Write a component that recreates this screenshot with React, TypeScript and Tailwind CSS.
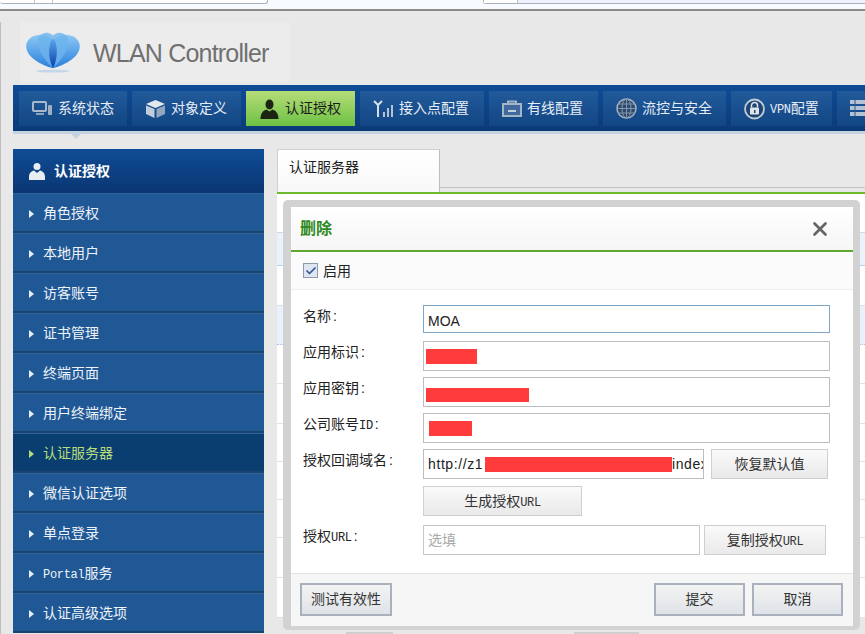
import type { ReactNode } from 'react';
import { Check, X } from 'lucide-react';

const FONT = '"Liberation Sans", "Noto Sans CJK SC", sans-serif';

// latin inside the Chinese labels is a narrow typewriter face in the original
function Latin({ children }: { children: ReactNode }) {
  return <span className="font-['Liberation_Mono'] text-[12px] tracking-[-0.3px]">{children}</span>;
}

function PcIcon() {
  return (
    <svg width="21" height="15" viewBox="0 0 21 15" fill="none">
      <rect x="1" y="1" width="13" height="9" rx="1" stroke="#a9b8ca" strokeWidth="2" />
      <path d="M4 13h8" stroke="#8fa3bb" strokeWidth="2" />
      <rect x="16" y="4" width="4" height="10" rx="1" fill="#9fb0c4" />
    </svg>
  );
}

function BoxIcon() {
  return (
    <svg width="21" height="20" viewBox="0 0 21 20">
      <path d="M10.5 1 20 5l-9.500 4L1 5z" fill="#e4e9ef" />
      <path d="M1 6.500l8.500 3.500v9L1 15z" fill="#c1ccd9" />
      <path d="M20 6.500 11.500 10v9l8.500-4z" fill="#93a7bf" />
    </svg>
  );
}

function UserDarkIcon() {
  return (
    <svg width="21" height="20" viewBox="-1.5 0 21 20">
      <ellipse cx="9" cy="5.500" rx="4" ry="5" fill="#1c2413" />
      <path d="M0 20c0-6 3-8.500 6-9.500l3 2 3-2c3 1 6 3.500 6 9.500z" fill="#1c2413" />
    </svg>
  );
}

function AntennaIcon() {
  return (
    <svg width="21" height="19" viewBox="0 0 21 19" fill="none">
      <path d="M1 2l4 4 4-4M5 6v12" stroke="#d7dee7" strokeWidth="2" />
      <rect x="10" y="13" width="2" height="5" fill="#b6c3d3" />
      <rect x="14" y="9" width="2" height="9" fill="#b6c3d3" />
      <rect x="18" y="6" width="2" height="12" fill="#b6c3d3" />
    </svg>
  );
}

function PortIcon() {
  return (
    <svg width="20" height="17" viewBox="0 0 20 17" fill="none">
      <rect x="1" y="4" width="18" height="12" fill="#3f6a9e" stroke="#a5b5c8" strokeWidth="2" />
      <path d="M6 4V1.500h8V4" stroke="#a5b5c8" strokeWidth="2" />
      <path d="M6 11h8" stroke="#c6d1de" strokeWidth="2" />
    </svg>
  );
}

function GlobeIcon() {
  return (
    <svg width="21" height="21" viewBox="0 0 21 21" fill="none">
      <circle cx="10.500" cy="10.500" r="9.500" fill="#2d4a6e" stroke="#a7b4c3" strokeWidth="1.500" />
      <ellipse cx="10.500" cy="10.500" rx="4.500" ry="9.500" stroke="#8496ab" />
      <path d="M10.500 1v19M1 10.500h19M2.500 6h16M2.500 15h16" stroke="#8496ab" />
    </svg>
  );
}

function LockIcon() {
  return (
    <svg width="21" height="22" viewBox="0 0 21 22" fill="none">
      <circle cx="10.500" cy="11" r="9.500" fill="#1e4573" stroke="#c4ccd6" strokeWidth="1.800" />
      <rect x="6" y="9.500" width="9" height="7" rx="1" fill="#dfe4ea" />
      <path d="M7.500 9.500V7.500a3 3 0 0 1 6 0v2" stroke="#dfe4ea" strokeWidth="1.500" />
      <rect x="10" y="12" width="1.500" height="3" fill="#1e4573" />
    </svg>
  );
}

function ServerIcon() {
  return (
    <svg width="20" height="17" viewBox="0 0 20 17">
      <rect y="0" width="20" height="4" fill="#b5c2d1" />
      <rect y="6" width="20" height="4" fill="#b5c2d1" />
      <rect y="12" width="20" height="4" fill="#b5c2d1" />
      <path d="M5 0v16" stroke="#2a5a92" strokeWidth="1" />
    </svg>
  );
}

function Logo() {
  return (
    <svg width="54" height="44" viewBox="0 0 56 46">
      <defs>
        <linearGradient id="petal" x1="0" y1="0" x2="0" y2="1">
          <stop offset="0" stopColor="#8cc8f4" />
          <stop offset="1" stopColor="#2a7fdc" />
        </linearGradient>
        <linearGradient id="mid" x1="0" y1="0" x2="0" y2="1">
          <stop offset="0" stopColor="#5aa6ea" />
          <stop offset="1" stopColor="#0a3fae" />
        </linearGradient>
      </defs>
      <path d="M28 40C14 36 0 28 0 17 0 9 8 5 15 5c6 0 11 3 13 7 2-4 7-7 13-7 7 0 15 4 15 12 0 11-14 19-28 23z" fill="url(#petal)" />
      <path d="M28 40C20 32 12 22 12 12 12 5 20 0 27 5c.4.300.700.700 1 1 .300-.300.600-.700 1-1 7-5 15 0 15 7 0 10-8 20-16 28z" fill="#6db4ee" opacity="0.8" />
      <path d="M28 40c-4-8-5-18-3-26 .600-2 1.500-4 3-5 1.500 1 2.400 3 3 5 2 8 1 18-3 26z" fill="url(#mid)" />
      <ellipse cx="28" cy="43" rx="17" ry="1.500" fill="#c4d6e8" />
    </svg>
  );
}

const NAV_ITEMS: { label: ReactNode; width: string; icon: ReactNode; active?: boolean }[] = [
  { label: '系统状态', width: 'w-[108px]', icon: <PcIcon /> },
  { label: '对象定义', width: 'w-[109px]', icon: <BoxIcon /> },
  { label: '认证授权', width: 'w-[109px]', icon: <UserDarkIcon />, active: true },
  { label: '接入点配置', width: 'w-[124px]', icon: <AntennaIcon /> },
  { label: '有线配置', width: 'w-[109px]', icon: <PortIcon /> },
  { label: '流控与安全', width: 'w-[123px]', icon: <GlobeIcon /> },
  { label: <><Latin>VPN</Latin>配置</>, width: 'w-[101px]', icon: <LockIcon /> },
  { label: '', width: 'w-[60px]', icon: <ServerIcon /> },
];

const SIDE_ITEMS: { key: string; label: ReactNode }[] = [
  { key: 'role', label: '角色授权' },
  { key: 'local', label: '本地用户' },
  { key: 'guest', label: '访客账号' },
  { key: 'cert', label: '证书管理' },
  { key: 'page', label: '终端页面' },
  { key: 'bind', label: '用户终端绑定' },
  { key: 'server', label: '认证服务器' },
  { key: 'wechat', label: '微信认证选项' },
  { key: 'sso', label: '单点登录' },
  { key: 'portal', label: <><Latin>Portal</Latin>服务</> },
  { key: 'adv', label: '认证高级选项' },
];

const ROW_HEIGHTS = [39, 40, 38, 38, 38, 40, 40];

function FormLabel({ children }: { children: ReactNode }) {
  return (
    <div className="w-[120px] shrink-0 pt-[1px] text-[14px] leading-[20px] text-[#222]">
      {children}
      <span className="ml-[2px]">:</span>
    </div>
  );
}

function RedactedField({ blockClass }: { blockClass: string }) {
  return (
    <div className="flex h-[30px] w-[407px] border border-[#bdbdbd] bg-white">
      <div className={`bg-[#ff3b3b] ${blockClass}`} />
    </div>
  );
}

function SoftButton({ children, className = '' }: { children: ReactNode; className?: string }) {
  return (
    <button className={`h-[30px] border border-[#cfcfcf] bg-gradient-to-b from-[#fafafa] to-[#e9e9e9] text-[14px] text-[#333] ${className}`}>
      {children}
    </button>
  );
}

function FooterButton({ children, className = '' }: { children: ReactNode; className?: string }) {
  return (
    <button className={`h-[33px] border-2 border-[#a9b2bc] bg-gradient-to-b from-[#f3f3f3] to-[#dfe3e8] text-[14px] text-[#333] ${className}`}>
      {children}
    </button>
  );
}

function Modal() {
  return (
    <div className="absolute left-[283px] top-[200px] h-[430px] w-[577px] rounded-[5px] bg-[#d2d2d2] pb-[4px] pl-[8px] pr-[7px] pt-[7px]">
      <div className="flex h-full flex-col bg-white">
        <div className="flex h-[45px] shrink-0 items-center justify-between border-b-2 border-[#5fa92e] bg-gradient-to-b from-white to-[#f6f6f6] pl-[9px] pr-[22px]">
          <span className="text-[16px] font-bold text-[#2f8a1f]">删除</span>
          <X size={22} strokeWidth={3} className="text-[#666]" />
        </div>
        <div className="flex h-[38px] shrink-0 items-center gap-[5px] border-b border-[#eeeeee] bg-[#fbfbfb] pl-[12px]">
          <div className="flex h-[15px] w-[15px] items-center justify-center border border-[#8d9aa8] bg-[#dfe6f2]">
            <Check size={12} strokeWidth={3.500} className="text-[#33559c]" />
          </div>
          <span className="pt-[1px] text-[14px] text-[#222]">启用</span>
        </div>
        <div className="flex flex-1 flex-col pl-[12px] pt-[15px]">
          <div className="flex h-[28px]">
            <FormLabel>名称</FormLabel>
            <input
              readOnly
              value="MOA"
              className="h-[28px] w-[407px] border border-[#7fa6c9] bg-white px-[4px] pt-[3px] text-[14px] text-[#222] outline-none"
            />
          </div>
          <div className="mt-[8px] flex">
            <FormLabel>应用标识</FormLabel>
            <RedactedField blockClass="ml-[2px] mt-[7px] h-[15px] w-[51px]" />
          </div>
          <div className="mt-[6px] flex">
            <FormLabel>应用密钥</FormLabel>
            <RedactedField blockClass="ml-[2px] mt-[10px] h-[14px] w-[103px]" />
          </div>
          <div className="mt-[6px] flex">
            <FormLabel>公司账号<Latin>ID</Latin></FormLabel>
            <RedactedField blockClass="ml-[5px] mt-[7px] h-[15px] w-[43px]" />
          </div>
          <div className="mt-[6px] flex">
            <FormLabel>授权回调域名</FormLabel>
            <div className="flex h-[30px] w-[281px] items-center overflow-hidden whitespace-nowrap border border-[#bdbdbd] bg-white pl-[4px] text-[14px] tracking-[0.6px] text-[#222]">
              <span className="w-[57px] shrink-0">http://z1</span>
              <span className="h-[15px] w-[187px] shrink-0 bg-[#ff3b3b]" />
              <span>index</span>
            </div>
            <SoftButton className="ml-[7px] w-[117px]">恢复默认值</SoftButton>
          </div>
          <div className="ml-[120px] mt-[7px]">
            <SoftButton className="w-[159px]">生成授权<Latin>URL</Latin></SoftButton>
          </div>
          <div className="mt-[9px] flex">
            <FormLabel>授权<Latin>URL</Latin></FormLabel>
            <input
              readOnly
              placeholder="选填"
              className="h-[30px] w-[277px] border border-[#c8c8c8] bg-white px-[4px] text-[14px] outline-none placeholder:text-[#aaa]"
            />
            <SoftButton className="ml-[4px] w-[122px]">复制授权<Latin>URL</Latin></SoftButton>
          </div>
        </div>
        <div className="flex h-[53px] shrink-0 items-center justify-between border-t border-[#e2e2e2] bg-[#f6f6f6] pb-[1px] pl-[9px] pr-[10px]">
          <FooterButton className="w-[92px]">测试有效性</FooterButton>
          <div className="flex gap-[7px]">
            <FooterButton className="w-[91px]">提交</FooterButton>
            <FooterButton className="w-[91px]">取消</FooterButton>
          </div>
        </div>
      </div>
    </div>
  );
}

export default function App() {
  return (
    <div className="relative h-[634px] w-[865px] overflow-hidden bg-[#e8e8e8]" style={{ fontFamily: FONT }}>
      {/* browser chrome strip */}
      <div className="flex h-[11px] items-start border-b-2 border-[#8a8a8a] bg-[#f7faff]">
        <div className="flex h-[4px] w-[268px] rounded-b-[3px] border-b border-r border-[#a9b3c0] bg-white">
          <div className="w-[35px] border-r border-[#c5c5c5]" />
          <div className="w-[18px] border-r border-[#c5c5c5]" />
        </div>
        <div className="ml-[215px] flex h-[4px] flex-1 rounded-bl-[3px] border-b border-l border-[#a9b3c0] bg-[#eef3fb]">
          <div className="w-[34px] border-r border-[#c5c5c5] bg-white" />
        </div>
      </div>

      <div className="h-[623px] border-l border-[#bdbdbd]">
        {/* logo */}
        <div className="ml-[19px] mt-[11px] flex h-[60px] w-[270px] items-center bg-[#ececec] pl-[6px]">
          <Logo />
          <span className="ml-[13px] pt-[3px] text-[25px] tracking-[-0.8px] text-[#707070]">WLAN Controller</span>
        </div>

        {/* top nav */}
        <div className="ml-[12px] mt-[3px] flex h-[46px] gap-[5px] overflow-hidden bg-gradient-to-b from-[#0f4c96] to-[#0b3a78] pl-[6px] pt-[6px]">
          {NAV_ITEMS.map((item, i) => (
            <div
              key={i}
              className={`flex h-[35px] shrink-0 items-center gap-[5px] pl-[13px] text-[14px] ${item.width} ${
                item.active
                  ? 'bg-gradient-to-b from-[#b5dc78] to-[#6cc143] text-[#1b1b1b]'
                  : 'bg-gradient-to-b from-[#215a9a] to-[#124684] text-[#e6edf5]'
              }`}
            >
              {item.icon}
              <span>{item.label}</span>
            </div>
          ))}
        </div>
        <div className="ml-[12px] h-[3px] bg-[#c5d3e0]" />

        {/* body */}
        <div className="ml-[12px] mt-[15px] flex">
          <div className="w-[251px] shrink-0">
            <div className="flex h-[44px] items-center gap-[9px] bg-gradient-to-b from-[#0f4c96] to-[#0a3672] pl-[16px] text-[14px] font-bold text-white">
              <svg width="16" height="18" viewBox="0 0 16 18">
                <circle cx="8" cy="4.500" r="3.500" fill="#e8edf3" />
                <path d="M0 18v-3c0-4 2.500-6 5-6.500L8 11l3-2.500c2.500.5 5 2.500 5 6.500v3z" fill="#e8edf3" />
              </svg>
              <span>认证授权</span>
            </div>
            {SIDE_ITEMS.map((item) => {
              const active = item.key === 'server';
              return (
                <div
                  key={item.key}
                  className={`flex h-[40px] items-center gap-[9px] border-b-2 border-t border-b-[#1a436f] border-t-[#2f649f] pl-[16px] pt-[2px] text-[14px] ${
                    active ? 'border-t-[#0a3d70] bg-[#0a3d70] text-[#b6dc7c]' : 'bg-[#205895] text-[#eef3f8]'
                  }`}
                >
                  <span
                    className={`h-0 w-0 border-y-[4px] border-l-[5px] border-y-transparent ${
                      active ? 'border-l-[#b6dc7c]' : 'border-l-[#e8eef5]'
                    }`}
                  />
                  <span>{item.label}</span>
                </div>
              );
            })}
          </div>

          {/* table behind the dialog */}
          <div className="ml-[13px] flex-1">
            <div className="flex h-[43px]">
              <div className="h-[43px] w-[163px] border-l border-r border-t border-[#d0d0d0] border-r-[#bdbdbd] bg-gradient-to-b from-white to-[#f8f8f8] pl-[11px] pt-[7px] text-[14px] text-[#222]">
                认证服务器
              </div>
              <div className="h-[39px] flex-1 border-b border-[#c4c4c4]" />
            </div>
            <div className="h-[2px] bg-[#6cb92e]" />
            <div className="h-[39px] border-b border-[#d8d8d8] bg-white" />
            <div className="h-[33px] border-b border-[#b8d0ec] bg-[#eaf2fc]" />
            <div className="h-[40px] border-b border-[#dddddd] bg-white" />
            <div className="h-[39px] border-b border-dotted border-[#a9c2e2] bg-[#e8f1fc]" />
            {ROW_HEIGHTS.map((h, n) => (
              <div key={n} className="border-b border-[#e2e2e2] bg-white" style={{ height: h }} />
            ))}
          </div>
        </div>
      </div>

      <div className="absolute left-[71px] top-[134px] h-0 w-0 border-x-[5px] border-t-[5px] border-x-transparent border-t-[#c5d3e0]" />
      <Modal />
      {/* pager peeking out under the dialog */}
      <div className="absolute left-[346px] top-[632px] h-[2px] w-[47px] bg-[#cfcfcf]" />
      <div className="absolute left-[574px] top-[632px] h-[2px] w-[65px] bg-[#cfcfcf]" />
    </div>
  );
}
